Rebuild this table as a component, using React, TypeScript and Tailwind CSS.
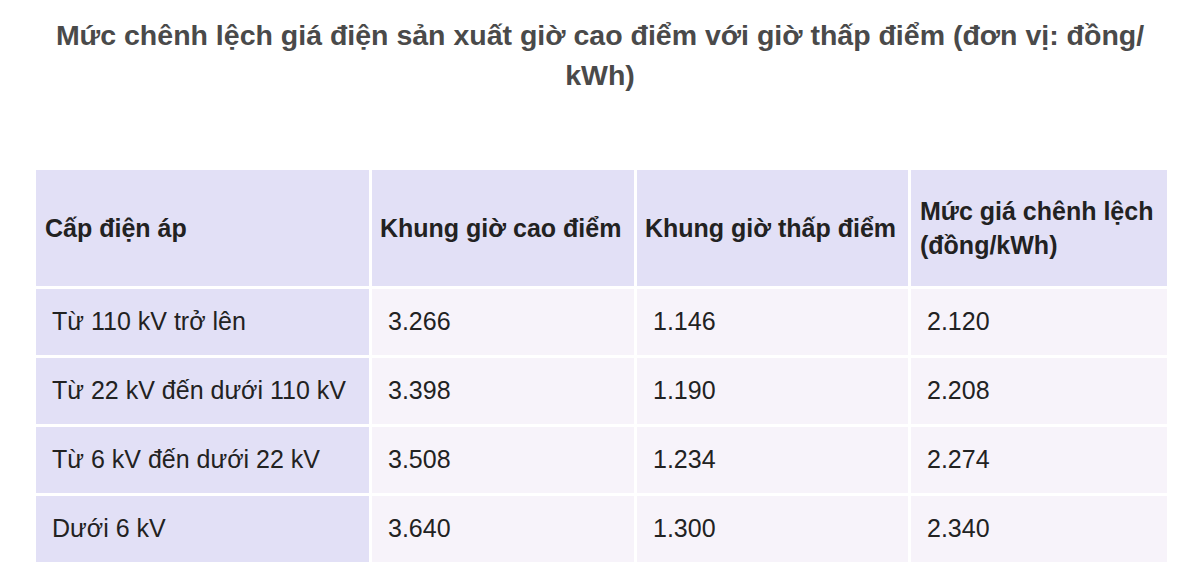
const rows = [
  { level: "Từ 110 kV trở lên", peak: "3.266", low: "1.146", diff: "2.120" },
  { level: "Từ 22 kV đến dưới 110 kV", peak: "3.398", low: "1.190", diff: "2.208" },
  { level: "Từ 6 kV đến dưới 22 kV", peak: "3.508", low: "1.234", diff: "2.274" },
  { level: "Dưới 6 kV", peak: "3.640", low: "1.300", diff: "2.340" },
]

export default function App() {
  return (
    <div className="w-[1200px] h-[588px] bg-white overflow-hidden font-['Liberation_Sans',Arial,sans-serif]">
      {/* Title */}
      <h2 className="pt-[15px] text-center text-[28.5px] leading-[40px] font-bold text-[#4a4a4a]">
        Mức chênh lệch giá điện sản xuất giờ cao điểm với giờ thấp điểm (đơn vị: đồng/
        <br />
        kWh)
      </h2>

      {/* Table */}
      <table className="mt-[72px] ml-[33px] w-[1137px] table-fixed border-separate border-spacing-[3px] text-[#222]">
        <colgroup>
          <col className="w-[333px]" />
          <col className="w-[262px]" />
          <col className="w-[271px]" />
          <col className="w-[256px]" />
        </colgroup>
        <thead>
          <tr className="h-[116px] bg-[#e2e0f6] text-left text-[25px] font-bold">
            <th className="px-[9px] leading-[34px]">Cấp điện áp</th>
            <th className="px-[8px] leading-[34px] whitespace-nowrap">Khung giờ cao điểm</th>
            <th className="px-[8px] leading-[34px] whitespace-nowrap">Khung giờ thấp điểm</th>
            <th className="px-[9px] leading-[34px] whitespace-nowrap">
              Mức giá chênh lệch
              <br />
              (đồng/kWh)
            </th>
          </tr>
        </thead>
        <tbody className="text-[25px]">
          {rows.map((r) => (
            <tr key={r.level} className="h-[66px]">
              <td className="bg-[#e2e0f6] px-4 whitespace-nowrap">{r.level}</td>
              <td className="bg-[#f7f3fa] px-4">{r.peak}</td>
              <td className="bg-[#f7f3fa] px-4">{r.low}</td>
              <td className="bg-[#f7f3fa] px-4">{r.diff}</td>
            </tr>
          ))}
        </tbody>
      </table>
    </div>
  )
}
